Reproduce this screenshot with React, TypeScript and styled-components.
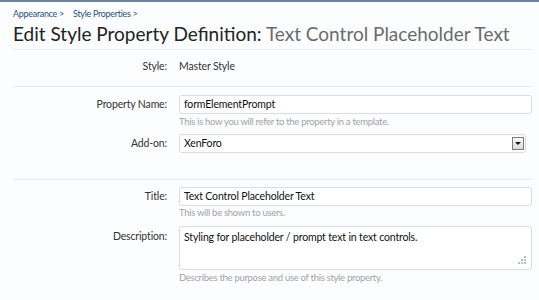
import { createGlobalStyle, styled } from 'styled-components';

const GlobalStyle = createGlobalStyle`
  html, body {
    margin: 0;
    padding: 0;
    background: #fcfdfe;
  }
  body {
    font-family: Lato, 'Liberation Sans', sans-serif;
    font-size: 10.5px;
    letter-spacing: -0.15px;
    line-height: 13px;
    color: #222;
  }
`;

const Page = styled.div`
  border-top: 2px solid #6b839c;
  padding: 0 7px 0 13px;
`;

const Breadcrumb = styled.div`
  display: flex;
  gap: 9px;
  padding-top: 6px;
  font-size: 9px;
  letter-spacing: -0.3px;
  line-height: 12px;
  color: #2b4f83;
`;

const Crumb = styled.span`
  &:after {
    content: ' >';
  }
`;

const Title = styled.h1`
  margin: 2px 0 0;
  padding-bottom: 3px;
  font-size: 19px;
  font-weight: normal;
  letter-spacing: 0;
  line-height: 24px;
  white-space: nowrap;
  color: #222;
  border-bottom: 1px solid #e6ecf1;
  span {
    color: #6b6b6b;
  }
`;

const Form = styled.div`
  padding-top: 10px;
`;

const Divider = styled.div<{ $gap: number }>`
  height: 1px;
  background: #e3eaf0;
  margin-top: ${(p) => p.$gap}px;
`;

const Row = styled.div<{ $top: number }>`
  display: grid;
  grid-template-columns: 154px 1fr;
  column-gap: 12px;
  margin-top: ${(p) => p.$top}px;
`;

const Label = styled.div<{ $top?: number }>`
  text-align: right;
  color: #333;
  padding-top: ${(p) => p.$top ?? 3}px;
`;

const Static = styled.div`
  color: #333;
`;

const Field = styled.div`
  display: flex;
  flex-direction: column;
`;

const TextBox = styled.div<{ $w?: number }>`
  box-sizing: border-box;
  height: 19px;
  width: ${(p) => (p.$w ? `${p.$w}px` : '100%')};
  border: 1px solid #d7dde3;
  border-radius: 3px;
  background: #fff;
  padding: 0 5px 0 4px;
  color: #111;
  display: flex;
  align-items: center;
  justify-content: space-between;
`;

const Area = styled(TextBox)`
  height: 44px;
  align-items: flex-start;
  padding-top: 4px;
  position: relative;
`;

const Grip = styled.div`
  position: absolute;
  right: 4px;
  bottom: 4px;
  width: 9px;
  height: 9px;
  background: radial-gradient(circle at 1px 1px, #b9bec3 1px, transparent 1.2px) 0 0 / 3px 3px;
  clip-path: polygon(100% 0, 100% 100%, 0 100%, 0 6px, 3px 6px, 3px 3px, 6px 3px, 6px 0);
`;

const SelectArrow = styled.div`
  box-sizing: border-box;
  width: 12px;
  height: 13px;
  margin-right: -4px;
  border: 1px solid #7a7a7a;
  background: linear-gradient(#f8f8f8, #dcdcdc);
  display: flex;
  align-items: center;
  justify-content: center;
  &:after {
    content: '';
    border-left: 3px solid transparent;
    border-right: 3px solid transparent;
    border-top: 3px solid #111;
  }
`;

const Hint = styled.div<{ $top?: number }>`
  margin-top: ${(p) => p.$top ?? 2}px;
  font-size: 9.5px;
  letter-spacing: -0.3px;
  line-height: 11px;
  color: #a3a3a3;
`;

export default function App() {
  return (
    <>
      <GlobalStyle />
      <Page>
        <Breadcrumb>
          <Crumb>Appearance</Crumb>
          <Crumb>Style Properties</Crumb>
        </Breadcrumb>
        <Title>
          Edit Style Property Definition: <span>Text Control Placeholder Text</span>
        </Title>
        <Form>
          <Row $top={0}>
            <Label $top={0}>Style:</Label>
            <Static>Master Style</Static>
          </Row>
          <Divider $gap={13} />
          <Row $top={8}>
            <Label>Property Name:</Label>
            <Field>
              <TextBox>formElementPrompt</TextBox>
              <Hint>This is how you will refer to the property in a template.</Hint>
            </Field>
          </Row>
          <Row $top={7}>
            <Label>Add-on:</Label>
            <Field>
              <TextBox $w={347}>
                XenForo
                <SelectArrow />
              </TextBox>
            </Field>
          </Row>
          <Divider $gap={26} />
          <Row $top={7}>
            <Label>Title:</Label>
            <Field>
              <TextBox>Text Control Placeholder Text</TextBox>
              <Hint $top={1}>This will be shown to users.</Hint>
            </Field>
          </Row>
          <Row $top={8}>
            <Label $top={4}>Description:</Label>
            <Field>
              <Area>
                Styling for placeholder / prompt text in text controls.
                <Grip />
              </Area>
              <Hint>Describes the purpose and use of this style property.</Hint>
            </Field>
          </Row>
        </Form>
      </Page>
    </>
  );
}
